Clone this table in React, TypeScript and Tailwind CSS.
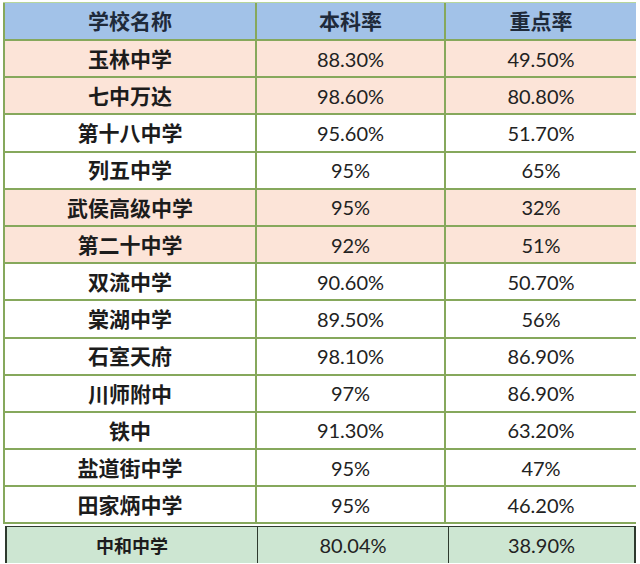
import React from "react";

type Row = { name: string; a: string; b: string; pink?: boolean };

const rows: Row[] = [
  { name: "玉林中学", a: "88.30%", b: "49.50%", pink: true },
  { name: "七中万达", a: "98.60%", b: "80.80%", pink: true },
  { name: "第十八中学", a: "95.60%", b: "51.70%" },
  { name: "列五中学", a: "95%", b: "65%" },
  { name: "武侯高级中学", a: "95%", b: "32%", pink: true },
  { name: "第二十中学", a: "92%", b: "51%", pink: true },
  { name: "双流中学", a: "90.60%", b: "50.70%" },
  { name: "棠湖中学", a: "89.50%", b: "56%" },
  { name: "石室天府", a: "98.10%", b: "86.90%" },
  { name: "川师附中", a: "97%", b: "86.90%" },
  { name: "铁中", a: "91.30%", b: "63.20%" },
  { name: "盐道街中学", a: "95%", b: "47%" },
  { name: "田家炳中学", a: "95%", b: "46.20%" },
];

const cjk = "font-['Noto_Sans_CJK_SC',sans-serif]";
const num = "font-['Lato','Liberation_Sans',sans-serif]";

export default function App() {
  return (
    <div className="w-[640px] h-[564px] bg-white overflow-hidden relative">
      <div className="pt-[2px] pl-[3px]">
        <div className="w-[633px] bg-[#86a85c] border-t border-[#b8d69c] pb-[2px] pr-[2px] pl-[2px] grid grid-cols-[250px_187px_190px] gap-[2px]">
          <div className={`h-[36px] bg-[#a2c2e8] flex items-center justify-center text-[21px] font-semibold text-[#1f2a3a] ${cjk}`}>学校名称</div>
          <div className={`h-[36px] bg-[#a2c2e8] flex items-center justify-center text-[21px] font-semibold text-[#1f2a3a] ${cjk}`}>本科率</div>
          <div className={`h-[36px] bg-[#a2c2e8] flex items-center justify-center text-[21px] font-semibold text-[#1f2a3a] ${cjk}`}>重点率</div>
          {rows.map((r) => {
            const bg = r.pink ? "bg-[#fce4d8]" : "bg-white";
            return (
              <React.Fragment key={r.name}>
                <div className={`h-[35.2px] ${bg} flex items-center justify-center text-[21px] font-semibold text-[#1c1c1c] ${cjk}`}>{r.name}</div>
                <div className={`h-[35.2px] ${bg} flex items-center justify-center text-[20px] text-[#222] ${num}`}>{r.a}</div>
                <div className={`h-[35.2px] ${bg} flex items-center justify-center text-[20px] text-[#222] ${num}`}>{r.b}</div>
              </React.Fragment>
            );
          })}
        </div>
      </div>
      <div className="pl-[5px] pt-[2px]">
        <div className="w-[631px] h-[37px] bg-[#cde6d2] border-l-2 border-t border-r-2 border-[#2e3a2e] grid grid-cols-[251px_191px_1fr]">
          <div className={`flex items-center justify-center border-r border-[#2e3a2e] text-[18px] font-bold text-[#1c1c1c] ${cjk}`}>中和中学</div>
          <div className={`flex items-center justify-center border-r border-[#2e3a2e] text-[20px] text-[#222] ${num}`}>80.04%</div>
          <div className={`flex items-center justify-center text-[20px] text-[#222] ${num}`}>38.90%</div>
        </div>
      </div>
    </div>
  );
}
